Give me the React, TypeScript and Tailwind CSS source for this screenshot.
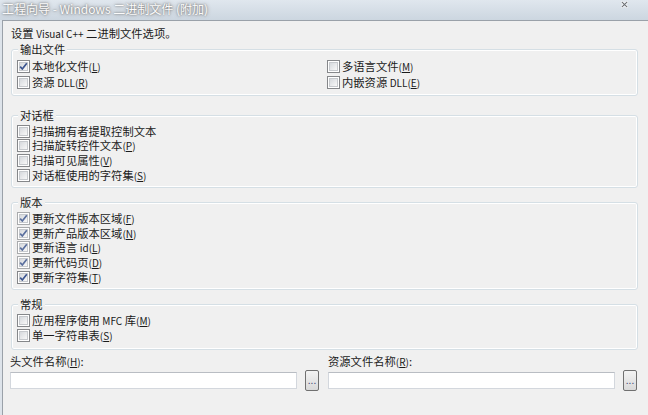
import React from "react";

const FONT = { fontFamily: '"Noto Sans CJK SC", "Noto Sans", sans-serif' };

function L({ children }: { children: React.ReactNode }) {
  return <span className="text-[10px]">{children}</span>;
}

function Hk({ k }: { k: string }) {
  return (
    <span className="text-[10px]">
      (<span className="underline underline-offset-[1px]">{k}</span>)
    </span>
  );
}

function Check({ checked, dim }: { checked?: boolean; dim?: boolean }) {
  return (
    <span
      className={`relative inline-flex h-[13px] w-[13px] shrink-0 items-center justify-center border bg-white ${
        dim ? "border-[#a9abad]" : "border-[#85878a]"
      }`}
    >
      <span className="h-[9px] w-[9px] border border-[#c6c9cd] bg-gradient-to-br from-[#d6d9dd] to-[#f8f8f8]" />
      {checked && (
        <svg
          className="absolute left-0 top-0"
          width="11"
          height="11"
          viewBox="0 0 11 11"
        >
          <path
            d="M2.2 5.6 L4.3 8 L8.8 2.3"
            fill="none"
            stroke={dim ? "#5a6f9e" : "#3c5590"}
            strokeWidth="1.7"
            strokeLinejoin="round"
          />
        </svg>
      )}
    </span>
  );
}

function Row({
  checked,
  dim,
  children,
  h = "h-[14.6px]",
}: {
  checked?: boolean;
  dim?: boolean;
  children: React.ReactNode;
  h?: string;
}) {
  return (
    <div className={`flex items-center gap-[2px] ${h}`}>
      <Check checked={checked} dim={dim} />
      <span className="whitespace-nowrap leading-[14px]">{children}</span>
    </div>
  );
}

function Group({
  title,
  className,
  children,
}: {
  title: string;
  className?: string;
  children: React.ReactNode;
}) {
  return (
    <fieldset
      className={`rounded-[3px] border border-[#d5dfe5] px-[5px] shadow-[inset_0_0_0_1px_#ffffff] ${className ?? ""}`}
    >
      <legend className="ml-[1px] bg-[#f0f0f0] px-[2px] leading-[14px]">
        {title}
      </legend>
      {children}
    </fieldset>
  );
}

function FileField({ label }: { label: React.ReactNode }) {
  return (
    <div className="flex flex-col">
      <div className="whitespace-nowrap leading-[14px]">{label}</div>
      <div className="mt-[1px] flex h-[21px] items-center gap-[8px]">
        <div className="h-[17px] flex-1 border border-[#d3d7dd] border-t-[#b9bdc3] bg-white" />
        <div className="flex h-[21px] w-[14px] justify-center rounded-[2px] border border-[#707070] bg-gradient-to-b from-[#f3f3f3] to-[#d9d9d9] pt-[4px]">
          <span className="text-[10px] leading-[10px] text-[#4a4a7a]">...</span>
        </div>
      </div>
    </div>
  );
}

export default function App() {
  return (
    <div
      className="flex h-[415px] w-[648px] flex-col overflow-hidden bg-[#f0f0f0] text-[11.3px] text-[#1b1b1b]"
      style={FONT}
    >
      <div className="flex h-[20px] shrink-0 justify-between bg-gradient-to-b from-[#e0e7ee] to-[#ccd6e0]">
        <span className="whitespace-nowrap pl-[2px] pt-[1px] text-[12px] leading-[15px] text-[#fbfbfb] [text-shadow:0_0_2px_#6b6b6b,0_0_4px_#8a8a8a]">
          工程向导 - Windows 二进制文件 (附加)
        </span>
        <svg
          className="mr-[20px] mt-[1px]"
          width="7"
          height="7"
          viewBox="0 0 7 7"
        >
          <path
            d="M0.5 0.5 L6.5 6.5 M6.5 0.5 L0.5 6.5"
            stroke="#ffffff"
            strokeWidth="2.4"
          />
          <path
            d="M0.8 0.8 L6.2 6.2 M6.2 0.8 L0.8 6.2"
            stroke="#6b6f75"
            strokeWidth="1.1"
          />
        </svg>
      </div>
      <div className="flex flex-1">
        <div className="w-[2px] bg-[#dde3ea]" />
        <div className="flex flex-1 flex-col border-l border-t border-[#9aa1a9] bg-[#f0f0f0] pl-[8px] pr-[10px] pt-[5px]">
          <div className="whitespace-nowrap leading-[14px]">
            设置 <L>Visual C++</L> 二进制文件选项。
          </div>

          <Group title="输出文件" className="mt-[1px] pb-[5px] pt-[2px]">
            <div className="grid grid-cols-[310px_1fr]">
              <Row checked h="h-[16px]">
                本地化文件<Hk k="L" />
              </Row>
              <Row h="h-[16px]">
                多语言文件<Hk k="M" />
              </Row>
              <Row h="h-[16px]">
                资源 <L>DLL</L>
                <Hk k="R" />
              </Row>
              <Row h="h-[16px]">
                内嵌资源 <L>DLL</L>
                <Hk k="E" />
              </Row>
            </div>
          </Group>

          <Group title="对话框" className="mt-[12px] pb-[5px] pt-[2px]">
            <Row>扫描拥有者提取控制文本</Row>
            <Row>
              扫描旋转控件文本<Hk k="P" />
            </Row>
            <Row>
              扫描可见属性<Hk k="V" />
            </Row>
            <Row>
              对话框使用的字符集<Hk k="S" />
            </Row>
          </Group>

          <Group title="版本" className="mt-[7px] pb-[5px] pt-[2px]">
            <Row checked dim>
              更新文件版本区域<Hk k="F" />
            </Row>
            <Row checked dim>
              更新产品版本区域<Hk k="N" />
            </Row>
            <Row checked dim>
              更新语言 <L>id</L>
              <Hk k="L" />
            </Row>
            <Row checked dim>
              更新代码页<Hk k="D" />
            </Row>
            <Row checked>
              更新字符集<Hk k="T" />
            </Row>
          </Group>

          <Group title="常规" className="mt-[7px] pb-[6px] pt-[2px]">
            <Row>
              应用程序使用 <L>MFC</L> 库<Hk k="M" />
            </Row>
            <Row>
              单一字符串表<Hk k="S" />
            </Row>
          </Group>

          <div className="-ml-[1px] mt-[4px] grid grid-cols-[309px_309px] gap-x-[9px]">
            <FileField
              label={
                <>
                  头文件名称<Hk k="H" />:
                </>
              }
            />
            <FileField
              label={
                <>
                  资源文件名称<Hk k="R" />:
                </>
              }
            />
          </div>
        </div>
      </div>
    </div>
  );
}
